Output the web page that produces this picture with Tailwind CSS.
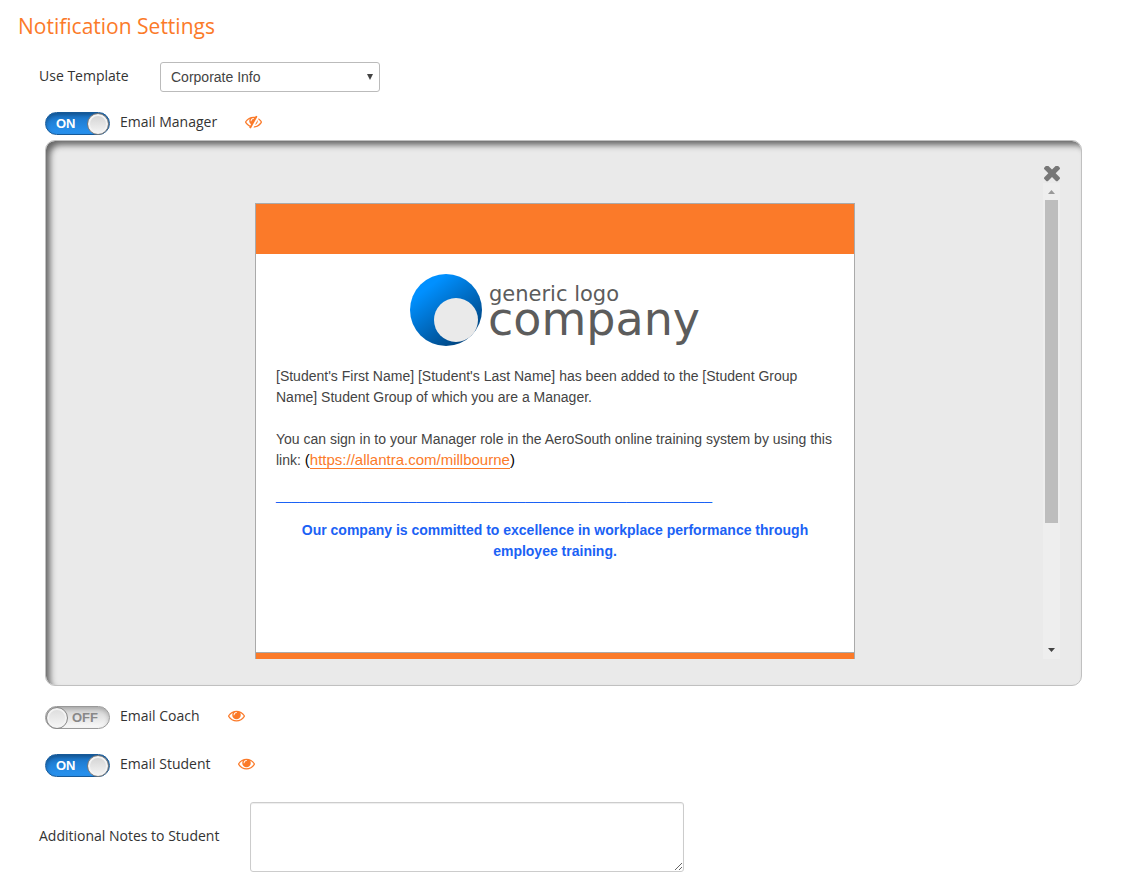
<!DOCTYPE html>
<html lang="en">
<head>
<meta charset="utf-8">
<meta name="viewport" content="width=device-width, initial-scale=1">
<title>Notification Settings</title>
<script src="https://cdn.jsdelivr.net/npm/@tailwindcss/browser@4"></script>
</head>
<body class="bg-white font-['Open_Sans',sans-serif] text-sm text-[#333]">
<svg class="hidden" aria-hidden="true">
  <symbol id="eye" viewBox="0 0 1792 1792"><path d="M1664 960q-152-236-381-353 61 104 61 225 0 185-131.5 316.5t-316.5 131.5-316.5-131.5-131.5-316.5q0-121 61-225-229 117-381 353 133 205 333.5 326.5t434.5 121.5 434.5-121.5 333.5-326.5zm-720-384q0-20-14-34t-34-14q-125 0-214.5 89.5t-89.5 214.5q0 20 14 34t34 14 34-14 14-34q0-86 61-147t147-61q20 0 34-14t14-34zm848 384q0 34-20 69-140 230-376.5 368.5t-499.5 138.5-499.5-139-376.5-368q-20-35-20-69t20-69q140-229 376.5-368t499.5-139 499.5 139 376.5 368q20 35 20 69z"/></symbol>
</svg>
<main class="pl-[18px] pr-11 pt-2">
  <h1 class="text-[21px] leading-9 text-[#fb7a29]">Notification Settings</h1>

  <div class="mt-[18px] flex items-center pl-[21px]">
    <label for="template" class="w-[121px] pb-0.5">Use Template</label>
    <div class="relative">
      <select id="template" class="h-[30px] w-[220px] appearance-none rounded-[3px] border border-[#bbb] bg-white px-2.5 font-['Liberation_Sans',sans-serif] text-[#444]"><option>Corporate Info</option></select>
      <svg class="pointer-events-none absolute right-[7px] top-3 size-1.5" viewBox="0 0 6 6" fill="#444" aria-hidden="true"><path d="M0 0h6L3 6z"/></svg>
    </div>
  </div>

  <div class="mt-5 flex items-center pl-[27px]">
    <label class="flex items-start gap-2.5">
      <input type="checkbox" checked class="peer sr-only">
      <span class="flex h-[23px] w-[65px] items-center justify-between rounded-full border border-[#175a99] bg-linear-to-b from-[#1a72c4] to-[#2994f2] pl-2.5 shadow-[inset_0_2px_4px_rgba(0,0,0,0.3)]"><b class="pt-0.5 font-['Liberation_Sans',sans-serif] text-[13px] text-white">ON</b><i class="size-[22px] rounded-full border border-[#777] bg-linear-to-b from-[#d2d2d2] to-[#f6f6f6] shadow-[inset_0_0_0_2px_#f3f3f3]"></i></span>
      <span class="pb-1">Email Manager</span>
    </label>
    <button type="button" aria-label="Hide manager preview" class="ml-7 pb-1.5 text-[#fb7a29]"><svg class="size-[17px]" viewBox="0 0 1792 1792" fill="currentColor"><path d="M555 1335l78-141q-87-63-136-159t-49-203q0-121 61-225-229 117-381 353 167 258 427 375zm389-759q0-20-14-34t-34-14q-125 0-214.500 89.500t-89.500 214.500q0 20 14 34t34 14 34-14 14-34q0-86 61-147t147-61q20 0 34-14t14-34zm363-191q0 7-1 9-106 189-316 567t-315 566l-49 89q-10 16-28 16-12 0-134-70-16-10-16-28 0-12 44-87-143-65-263.500-173t-208.500-245q-20-31-20-69t20-69q153-235 380-371t496-136q89 0 180 17l54-97q10-16 28-16 5 0 18 6t31 15.500 33 18.500 31.500 18.500 19.500 11.500q16 10 16 27zm37 447q0 139-79 253.500t-209 164.500l280-502q8 45 8 84zm448 128q0 35-20 69-39 64-109 145-150 172-347.500 267t-419.500 95l74-132q212-18 392.500-137t301.500-307q-115-179-282-294l63-112q95 64 182.500 153t144.500 182q20 34 20 69z"/></svg></button>
  </div>

  <section aria-label="Email preview" class="ml-[27px] mt-1 rounded-[10px] border border-[#c0c0c0] bg-[#eaeaea] pl-5 pr-[21px] pb-[26px] pt-[25px] shadow-[inset_5px_5px_6px_-1px_#666]">
    <div class="flex h-[17px] justify-end">
      <button type="button" aria-label="Close preview" class="flex h-4 text-[#777]"><svg class="h-4 w-4" viewBox="302 420 1188 1188" fill="currentColor"><path d="M1490 1322q0 40-28 68l-136 136q-28 28-68 28t-68-28l-294-294-294 294q-28 28-68 28t-68-28l-136-136q-28-28-28-68t28-68l294-294-294-294q-28-28-28-68t28-68l136-136q28-28 68-28t68 28l294 294 294-294q28-28 68-28t68 28l136 136q28 28 28 68t-28 68l-294 294 294 294q28 28 28 68z"/></svg></button>
    </div>
    <div class="flex">
      <div class="min-w-0 grow pl-px pt-5 font-['Liberation_Sans',sans-serif] leading-[21px] text-[#444]">
        <article class="mx-auto max-w-[600px] border border-b-0 border-[#aaa] bg-white">
          <div class="h-[50px] bg-[#fb7a29]"></div>
          <div class="px-5 pb-[90px] pt-5">
            <svg class="mx-auto h-[72px] w-[290px]" viewBox="0 0 290 72" role="img" aria-label="generic logo company">
              <defs><linearGradient id="ball" x1="0.2" y1="0.1" x2="0.8" y2="0.9"><stop offset="0.1" stop-color="#0090ff"/><stop offset="1" stop-color="#004480"/></linearGradient></defs>
              <circle cx="36" cy="36" r="36" fill="url(#ball)"/>
              <circle cx="46" cy="46" r="22" fill="#eaeaea"/>
              <g font-family="DejaVu Sans, sans-serif" fill="#5c5c5c"><text x="79" y="27" font-size="21">generic logo</text><text x="78" y="61" font-size="46">company</text></g>
            </svg>
            <p class="mt-5">[Student's First Name] [Student's Last Name] has been added to the [Student Group Name] Student Group of which you are a Manager.</p>
            <p class="mt-[21px]">You can sign in to your Manager role in the AeroSouth online training system by using this link: <span class="text-[15px] leading-none text-black">(<a href="https://allantra.com/millbourne" class="border-b border-[#fb7a29] text-[#fb7a29]">https://allantra.com/millbourne</a>)</span></p>
            <p class="mt-3.5 text-[#1b62f5]">________________________________________________________</p>
            <p class="mt-3.5 text-center font-bold text-[#1b62f5]">Our company is committed to excellence in workplace performance through employee training.</p>
          </div>
          <div class="h-[7px] border-t border-[#aaa] bg-[#fb7a29]"></div>
        </article>
      </div>
      <div class="flex w-[17px] shrink-0 flex-col items-center bg-[#eee] pb-[7px] pt-[7px]" aria-hidden="true">
        <svg class="h-[4px] w-[7px] shrink-0" viewBox="0 0 7 4" fill="#999"><path d="M0 4h7L3.500 0z"/></svg>
        <div class="mt-1.5 flex w-[13px] grow flex-col pb-1.5"><div class="h-[73%] bg-[#bdbdbd]"></div></div>
        <svg class="h-[4px] w-[7px] shrink-0" viewBox="0 0 7 4" fill="#444"><path d="M0 0h7L3.500 4z"/></svg>
      </div>
    </div>
  </section>

  <div class="mt-5 flex items-center pl-[27px]">
    <label class="flex items-start gap-2.5">
      <input type="checkbox" class="peer sr-only">
      <span class="flex h-[23px] w-[65px] items-center justify-between rounded-full border border-[#999] bg-linear-to-b from-[#cfcfcf] to-[#fafafa] pr-[11px] shadow-[inset_0_2px_4px_rgba(0,0,0,0.2)]"><i class="size-[22px] rounded-full border border-[#888] bg-linear-to-b from-[#dcdcdc] to-[#f6f6f6] shadow-[inset_0_0_0_2px_#f3f3f3]"></i><b class="pt-0.5 font-['Liberation_Sans',sans-serif] text-[13px] text-[#888]">OFF</b></span>
      <span class="pb-1">Email Coach</span>
    </label>
    <button type="button" aria-label="Show coach preview" class="ml-7 pb-1.5 text-[#fb7a29]"><svg class="size-[17px]" fill="currentColor"><use href="#eye"/></svg></button>
  </div>

  <div class="mt-6 flex items-center pl-[27px]">
    <label class="flex items-start gap-2.5">
      <input type="checkbox" checked class="peer sr-only">
      <span class="flex h-[23px] w-[65px] items-center justify-between rounded-full border border-[#175a99] bg-linear-to-b from-[#1a72c4] to-[#2994f2] pl-2.5 shadow-[inset_0_2px_4px_rgba(0,0,0,0.3)]"><b class="pt-0.5 font-['Liberation_Sans',sans-serif] text-[13px] text-white">ON</b><i class="size-[22px] rounded-full border border-[#777] bg-linear-to-b from-[#d2d2d2] to-[#f6f6f6] shadow-[inset_0_0_0_2px_#f3f3f3]"></i></span>
      <span class="pb-1">Email Student</span>
    </label>
    <button type="button" aria-label="Show student preview" class="ml-7 pb-1.5 text-[#fb7a29]"><svg class="size-[17px]" fill="currentColor"><use href="#eye"/></svg></button>
  </div>

  <div class="mt-6 flex items-center pl-[21px]">
    <label for="notes" class="w-[211px] pb-0.5">Additional Notes to Student</label>
    <textarea id="notes" class="h-[70px] w-[434px] resize rounded-[3px] border border-[#ccc] bg-white p-2 shadow-[inset_0_1px_1px_rgba(0,0,0,0.075)]"></textarea>
  </div>
</main>
</body>
</html>
